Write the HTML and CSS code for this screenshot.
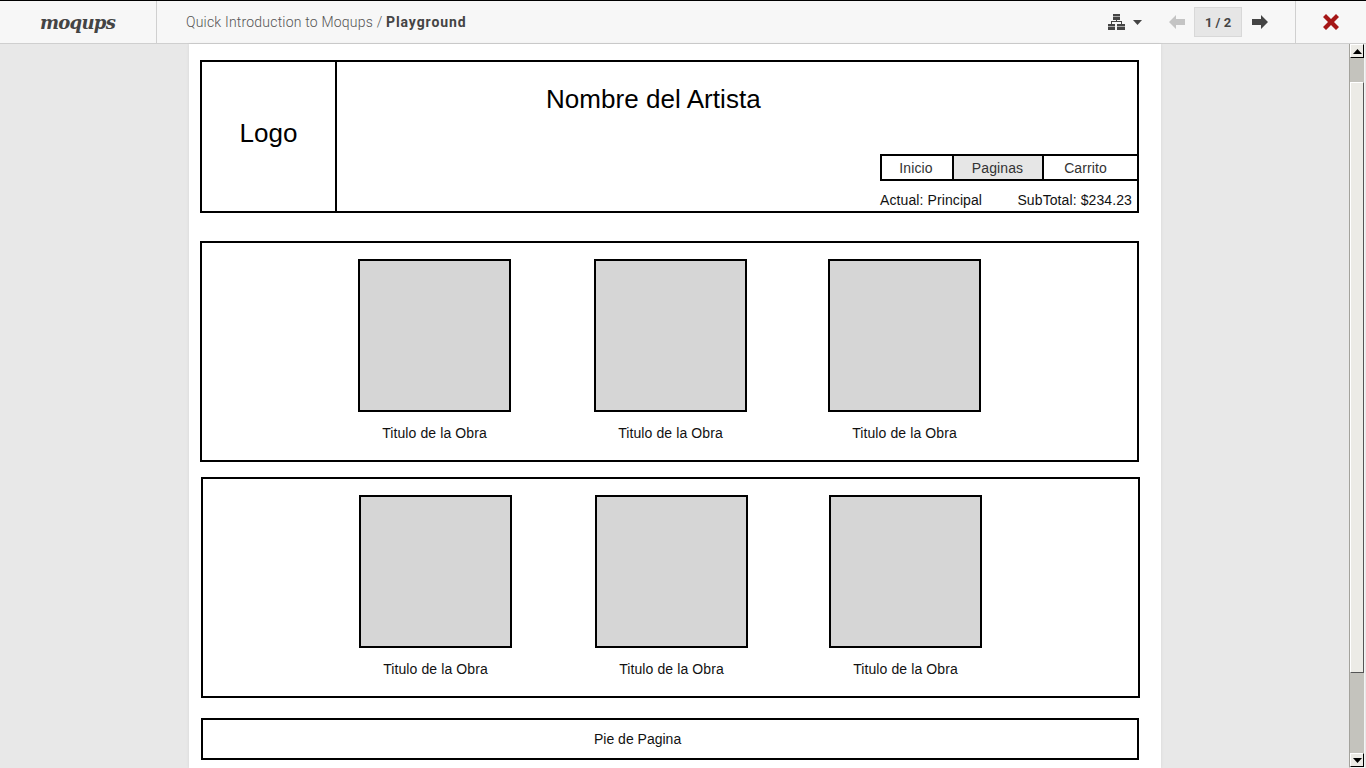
FILE: index.html
```html
<!DOCTYPE html>
<html lang="es">
<head>
<meta charset="utf-8">
<title>Moqups</title>
<link rel="stylesheet" href="styles.css">
</head>
<body>
<header class="topbar">
  <div class="logo-cell"><span class="logo">moqups</span></div>
  <div class="crumbs">Quick Introduction to Moqups / <b>Playground</b></div>
  <div class="tools">
    <svg class="i-tree" width="17" height="16" viewBox="0 0 17 16"><path fill="#444" d="M5 0h7v6H5zM0 10h7v6H0zM9 10h8v6H9z"/><path fill="#aaa" d="M5 2h7v1H5zM0 12h7v1H0zM9 12h8v1H9z"/><path fill="#444" d="M8 6h1v1h5v3h-1V8H4v2H3V7h5z"/></svg>
    <svg class="i-caret" width="9" height="5" viewBox="0 0 9 5"><path fill="#444" d="M0 0h9L4.500 5z"/></svg>
    <svg class="i-prev" width="16" height="14" viewBox="0 0 16 14"><path fill="#c4c4c4" d="M7 0v4h9v6H7v4L0 7z"/></svg>
    <div class="pager">1 / 2</div>
    <svg class="i-next" width="16" height="14" viewBox="0 0 16 14"><path fill="#444" d="M9 0v4H0v6h9v4l7-7z"/></svg>
  </div>
  <div class="close-cell">
    <svg width="16" height="16" viewBox="0 0 16 16"><path fill="#a51616" d="M3 0l5 5 5-5 3 3-5 5 5 5-3 3-5-5-5 5-3-3 5-5-5-5z"/></svg>
  </div>
</header>
<div class="stage">
  <main class="canvas">
    <section class="box head">
      <div class="head-logo">Logo</div>
      <div class="head-main">
        <h1 class="artist">Nombre del Artista</h1>
        <nav class="menu">
          <span class="m1">Inicio</span>
          <span class="m2">Paginas</span>
          <span class="m3">Carrito</span>
        </nav>
        <div class="status"><span>Actual: Principal</span><span>SubTotal: $234.23</span></div>
      </div>
    </section>
    <section class="box gallery first">
      <figure class="work"><div class="thumb"></div><figcaption>Titulo de la Obra</figcaption></figure>
      <figure class="work"><div class="thumb"></div><figcaption>Titulo de la Obra</figcaption></figure>
      <figure class="work"><div class="thumb"></div><figcaption>Titulo de la Obra</figcaption></figure>
    </section>
    <section class="box gallery second">
      <figure class="work"><div class="thumb"></div><figcaption>Titulo de la Obra</figcaption></figure>
      <figure class="work"><div class="thumb"></div><figcaption>Titulo de la Obra</figcaption></figure>
      <figure class="work"><div class="thumb"></div><figcaption>Titulo de la Obra</figcaption></figure>
    </section>
    <footer class="box foot">Pie de Pagina</footer>
  </main>
  <div class="scrollbar">
    <div class="sb-btn"><svg width="9" height="5" viewBox="0 0 9 5"><path fill="#000" d="M4.500 0L9 5H0z"/></svg></div>
    <div class="sb-track"><div class="sb-thumb"></div></div>
    <div class="sb-btn"><svg width="9" height="5" viewBox="0 0 9 5"><path fill="#000" d="M0 0h9L4.500 5z"/></svg></div>
  </div>
</div>
</body>
</html>
```
FILE: styles.css
```css
* { box-sizing: border-box; }
html, body { margin: 0; height: 768px; overflow: hidden; }
body { background: #e8e8e8; font-family: "Liberation Sans", Arial, sans-serif; color: #000; }

.topbar {
  height: 44px; display: flex; align-items: center;
  background: #f7f7f7; border-top: 1px solid #000; border-bottom: 1px solid #cfcfcf;
}
.logo-cell {
  width: 157px; height: 100%; border-right: 1px solid #d0d0d0;
  display: flex; align-items: center; justify-content: center; padding-right: 1px;
}
.logo {
  font-family: "DejaVu Serif", serif; font-style: italic; font-weight: 700;
  font-size: 18px; letter-spacing: -0.7px; color: #444;
}
.crumbs { margin-left: 29px; flex: 1; font-family: Roboto, sans-serif; font-size: 14px; font-weight: 300; color: #555; letter-spacing: 0.2px; }
.crumbs b { font-weight: 700; color: #444; letter-spacing: 0.9px; }
.tools { display: flex; align-items: center; width: 188px; height: 100%; }
.i-tree { margin-left: 1px; }
.i-caret { margin-left: 8px; }
.i-prev { margin-left: 27px; }
.pager {
  width: 48px; height: 30px; margin-left: 9px;
  background: #e6e6e6; border: 1px solid #d8d8d8;
  display: flex; align-items: center; justify-content: center;
  font-family: Roboto, sans-serif; font-size: 13px; font-weight: 700; color: #444;
}
.i-next { margin-left: 10px; }
.close-cell {
  width: 71px; height: 100%; border-left: 1px solid #d0d0d0;
  display: flex; align-items: center; justify-content: center;
}

.stage { display: flex; height: 724px; padding-left: 189px; }
.canvas { width: 972px; height: 724px; margin-right: 189px; background: #fff; padding: 16px 0 0 11px; flex: none; overflow: hidden; box-shadow: 0 0 3px rgba(0,0,0,0.08); }
.box { border: 2px solid #000; width: 939px; background: #fff; }

.head { height: 153px; display: flex; }
.head-logo { width: 135px; border-right: 2px solid #000; display: flex; align-items: center; justify-content: center; font-size: 26px; padding-bottom: 7px; }
.head-main { flex: 1; display: flex; flex-direction: column; }
.artist { margin: 21px 0 0 209px; font-size: 26px; font-weight: 400; line-height: 32px; letter-spacing: 0.05px; }
.menu { display: flex; margin: 39px 0 0 543px; height: 27px; font-size: 14px; color: #333; letter-spacing: 0.1px; }
.menu span { border: 2px solid #000; display: flex; align-items: center; justify-content: center; }
.m1 { width: 74px; padding-right: 2px; }
.m2 { width: 92px; margin-left: -2px; background: #e6e6e6; padding-right: 1px; }
.m3 { flex: 1; margin-left: -2px; border-right: 0 !important; padding-right: 10px; }
.status { display: flex; justify-content: space-between; margin: 10px 5px 0 543px; font-size: 14px; line-height: 18px; color: #111; letter-spacing: 0.1px; }

.gallery { height: 221px; display: flex; padding: 16px 0 0 156px; }
.first { margin-top: 28px; }
.second { margin: 15px 0 0 1px; }
.work { margin: 0; width: 153px; }
.work + .work { margin-left: 83px; }
.work + .work + .work { margin-left: 81px; }
.thumb { width: 153px; height: 153px; background: #d6d6d6; border: 2px solid #000; }
.work figcaption { margin-top: 12px; text-align: center; font-size: 14px; line-height: 18px; color: #111; letter-spacing: 0.1px; }

.foot { margin: 20px 0 0 1px; width: 938px; height: 42px; padding-left: 391px; font-size: 14px; line-height: 38px; color: #111; }

.scrollbar {
  width: 16px; height: 724px; background: #c4c3bd; flex: none; margin-left: -1px;
  display: flex; flex-direction: column;
  border-left: 1px solid #a3a29c; border-right: 1px solid #f4f4f4; border-bottom: 1px solid #f4f4f4;
}
.sb-btn {
  width: 14px; height: 14px; background: #ecebe6; flex: none;
  border: 1px solid; border-color: #fff #000 #000 #fff;
  display: flex; align-items: center; justify-content: center;
}
.sb-track { flex: 1; padding-top: 24px; }
.sb-thumb { height: 591px; background: #ecebe6; border: 1px solid; border-color: #fff #555 #555 #fff; }
```
